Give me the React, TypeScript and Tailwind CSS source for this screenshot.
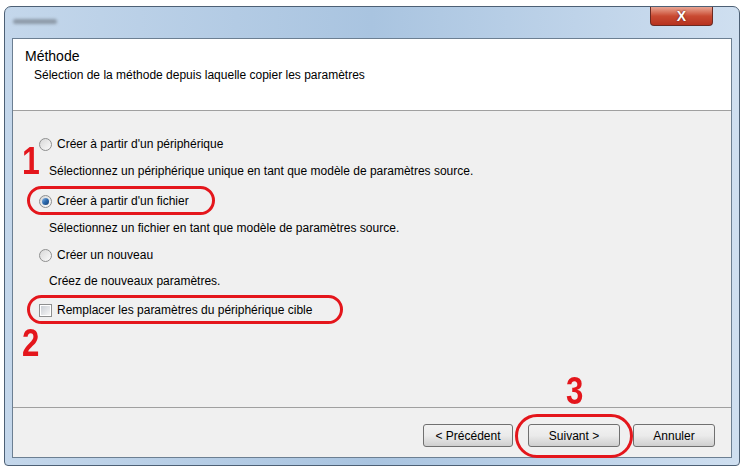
import React from 'react';

const font = { fontFamily: '"Liberation Sans", Arial, sans-serif' };

function Radio({ checked }: { checked?: boolean }) {
  return (
    <span className="relative inline-flex h-[13px] w-[13px] shrink-0 items-center justify-center rounded-full border border-[#8e8f8f] bg-gradient-to-br from-[#d8d8d8] to-[#fbfbfb]">
      {checked && (
        <span className="h-[7px] w-[7px] rounded-full bg-gradient-to-br from-[#8fb8e2] via-[#2b6aae] to-[#173f73]" />
      )}
    </span>
  );
}

function Checkbox() {
  return (
    <span className="inline-flex h-[13px] w-[13px] shrink-0 items-center justify-center border border-[#8e8f8f] bg-white">
      <span className="h-[9px] w-[9px] bg-gradient-to-br from-[#cbcfd5] to-[#f6f6f6]" />
    </span>
  );
}

function Button({ children, w }: { children: React.ReactNode; w: string }) {
  return (
    <div className={`flex h-[23px] ${w} items-center justify-center rounded-[3px] border border-[#707070] bg-gradient-to-b from-[#f2f2f2] via-[#ebebeb] to-[#cfcfcf] text-[12px] text-black`}>
      {children}
    </div>
  );
}

export default function App() {
  return (
    <div className="relative h-[471px] w-[743px] overflow-hidden bg-white" style={font}>
      <div className="ml-[4px] mt-[6px] flex h-[460px] w-[736px] flex-col rounded-t-[7px] rounded-b-[4px] border border-[#4d6075] bg-gradient-to-r from-[#c4d7eb] via-[#a9c4e0] to-[#cfdff0]">
        {/* title bar */}
        <div className="flex h-[31px] items-start justify-between pl-[8px] pr-[26px]">
          <div className="mt-[12px] h-[5px] w-[44px] rounded-sm bg-[#8d9aa8] blur-[1.5px]" />
          <div className="flex h-[19px] w-[63px] items-center justify-center rounded-b-[4px] border border-t-0 border-[#6b2a22] bg-gradient-to-b from-[#e8a593] via-[#c94a32] to-[#b7321f]">
            <span className="text-[14px] font-bold leading-none text-white [text-shadow:0_0_2px_#5a1a10]">X</span>
          </div>
        </div>
        {/* client */}
        <div className="mx-[7px] mb-[7px] flex flex-1 flex-col border border-[#6c7f92] bg-[#f0f0f0]">
          <div className="h-[72px] border-b border-[#a0a0a0] bg-white pl-[12px] pt-[8px]">
            <div className="text-[14px] leading-[18px] text-black">Méthode</div>
            <div className="mt-[3px] pl-[9px] text-[12px] leading-[15px] text-black">Sélection de la méthode depuis laquelle copier les paramètres</div>
          </div>
          <div className="h-[297px] border-b border-[#a0a0a0] pl-[26px] pt-[26px] text-[12px] leading-[15px] text-black">
            <div className="flex items-center gap-[5px]"><Radio /><span>Créer à partir d'un périphérique</span></div>
            <div className="mt-[12px] pl-[10px]">Sélectionnez un périphérique unique en tant que modèle de paramètres source.</div>
            <div className="mt-[15px] flex items-center gap-[5px]"><Radio checked /><span>Créer à partir d'un fichier</span></div>
            <div className="mt-[12px] pl-[10px]">Sélectionnez un fichier en tant que modèle de paramètres source.</div>
            <div className="mt-[12px] flex items-center gap-[5px]"><Radio /><span>Créer un nouveau</span></div>
            <div className="mt-[11px] pl-[10px]">Créez de nouveaux paramètres.</div>
            <div className="mt-[14px] flex items-center gap-[5px]"><Checkbox /><span>Remplacer les paramètres du périphérique cible</span></div>
          </div>
          <div className="flex flex-1 items-center justify-end pr-[16px] pt-[6px]">
            <Button w="w-[90px]">&lt; Précédent</Button>
            <div className="ml-[15px]"><Button w="w-[92px]">Suivant &gt;</Button></div>
            <div className="ml-[13px]"><Button w="w-[82px]">Annuler</Button></div>
          </div>
        </div>
      </div>

      {/* annotations */}
      <div className="pointer-events-none absolute left-[27px] top-[186px] h-[29px] w-[188px] rounded-full border-[3px] border-[#e4161c]" />
      <div className="pointer-events-none absolute left-[27px] top-[295px] h-[29px] w-[316px] rounded-full border-[3px] border-[#e4161c]" />
      <div className="pointer-events-none absolute left-[515px] top-[414px] h-[44px] w-[118px] rounded-[22px] border-[3px] border-[#e4161c]" />
      <div className="absolute left-[22px] top-[141px] origin-left scale-x-[0.82] text-[39px] font-bold leading-none text-[#e4161c]">1</div>
      <div className="absolute left-[22px] top-[324px] origin-left scale-x-[0.82] text-[38px] font-bold leading-none text-[#e4161c]">2</div>
      <div className="absolute left-[566px] top-[372px] origin-left scale-x-[0.82] text-[38px] font-bold leading-none text-[#e4161c]">3</div>
    </div>
  );
}
